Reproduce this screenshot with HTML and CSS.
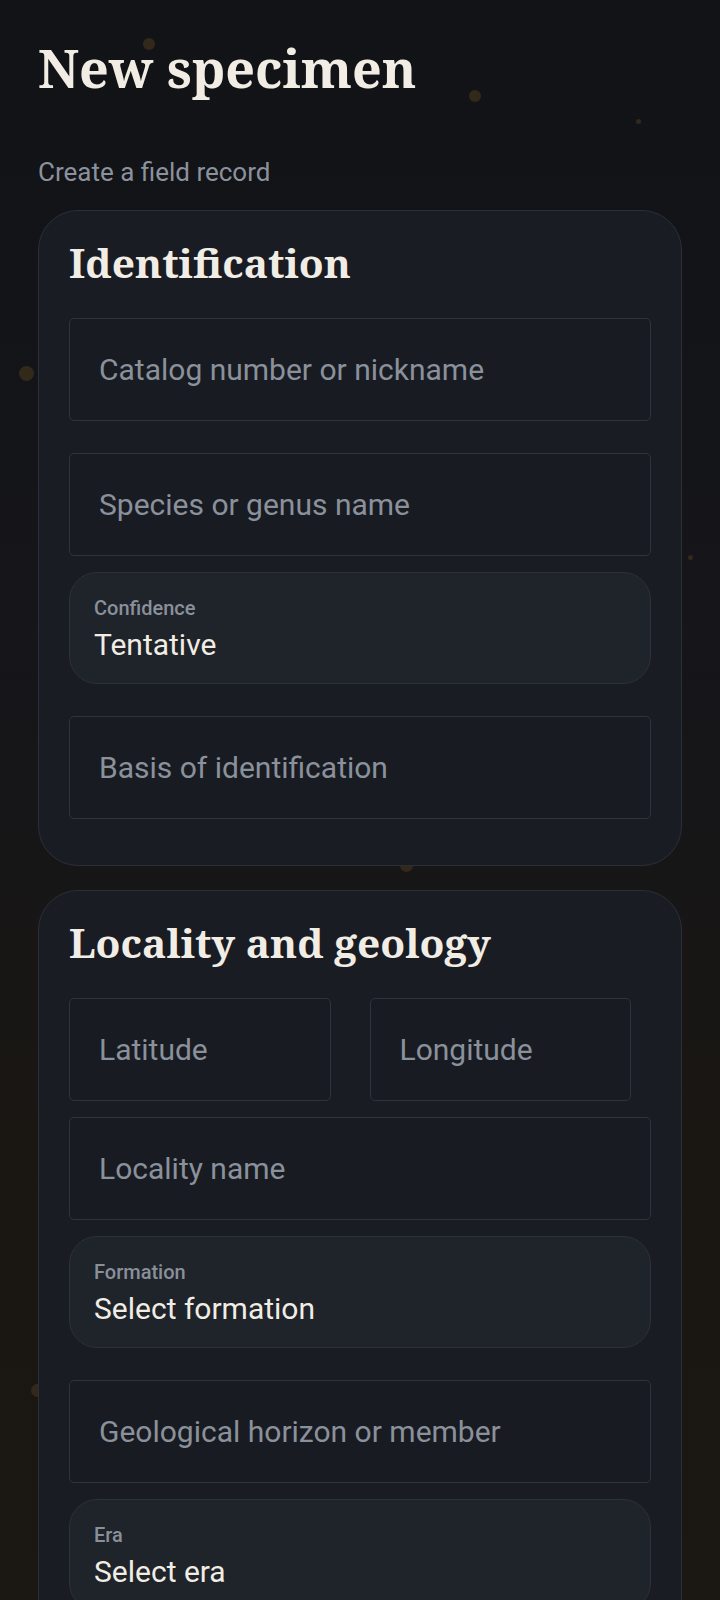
FILE: index.html
```html
<!DOCTYPE html>
<html lang="en">
<head>
    <meta charset="UTF-8">
    <meta name="viewport" content="width=device-width, initial-scale=1.0">
    <title>New specimen</title>
    <link rel="stylesheet" href="styles.css">
</head>
<body>
    <!-- faint dust specks floating behind the form -->
    <div class="dust">
        <span class="speck" style="left: 143px; top: 38px; width: 12px; height: 12px;"></span>
        <span class="speck" style="left: 469px; top: 90px; width: 12px; height: 12px;"></span>
        <span class="speck" style="left: 636px; top: 119px; width: 5px; height: 5px;"></span>
        <span class="speck" style="left: 19px; top: 366px; width: 15px; height: 15px;"></span>
        <span class="speck" style="left: 688px; top: 555px; width: 5px; height: 5px;"></span>
        <span class="speck" style="left: 400px; top: 859px; width: 13px; height: 13px;"></span>
        <span class="speck" style="left: 31px; top: 1384px; width: 13px; height: 13px;"></span>
    </div>

    <main class="page">
        <header class="page-header">
            <h1>New specimen</h1>
            <p class="subtitle">Create a field record</p>
        </header>

        <section class="card">
            <h2>Identification</h2>
            <input class="text-field" type="text" placeholder="Catalog number or nickname">
            <input class="text-field spaced" type="text" placeholder="Species or genus name">
            <div class="select-field">
                <span class="select-label">Confidence</span>
                <span class="select-value">Tentative</span>
            </div>
            <input class="text-field spaced" type="text" placeholder="Basis of identification">
        </section>

        <section class="card">
            <h2>Locality and geology</h2>
            <div class="field-row">
                <input class="text-field" type="text" placeholder="Latitude">
                <input class="text-field" type="text" placeholder="Longitude">
            </div>
            <input class="text-field" type="text" placeholder="Locality name">
            <div class="select-field">
                <span class="select-label">Formation</span>
                <span class="select-value">Select formation</span>
            </div>
            <input class="text-field spaced" type="text" placeholder="Geological horizon or member">
            <div class="select-field">
                <span class="select-label">Era</span>
                <span class="select-value">Select era</span>
            </div>
            <input class="text-field spaced" type="text" placeholder="Period or stage">
        </section>
    </main>
</body>
</html>
```

FILE: styles.css
```css
body {
    margin: 0;
    min-height: 1600px;
    font-family: Roboto, "Noto Sans", Arial, sans-serif;
    color: #f1ede4;
    background: linear-gradient(180deg, #111317 0%, #15151a 35%, #1a1712 65%, #1b1712 100%);
    position: relative;
    overflow: hidden;
}

.dust {
    position: absolute;
    inset: 0;
    z-index: 0;
}

.speck {
    position: absolute;
    border-radius: 50%;
    background: #33291b;
}

.page {
    position: relative;
    z-index: 1;
    padding: 0 38px;
}

.page-header h1 {
    margin: 0;
    padding-top: 37px;
    font-family: "Noto Serif", "DejaVu Serif", serif;
    font-size: 52px;
    font-weight: 700;
    line-height: 1.2;
    color: #f1ede4;
}

.subtitle {
    margin: 0;
    padding: 58px 0 0;
    font-size: 26px;
    line-height: 1.2;
    color: #8b929c;
}

.card {
    margin-top: 21px;
    margin-bottom: 24px;
    padding: 27px 30px 30px;
    background: #191c23;
    border: 1px solid #2a2f38;
    border-radius: 40px;
    display: flex;
    flex-direction: column;
}

.card h2 {
    margin: 0 0 32px;
    font-family: "Noto Serif", "DejaVu Serif", serif;
    font-size: 40.7px;
    font-weight: 700;
    line-height: 48px;
    color: #f1ede4;
}

.text-field {
    display: block;
    box-sizing: border-box;
    width: 100%;
    height: 103px;
    margin: 0 0 16px;
    padding: 0 29px;
    font-family: Roboto, "Noto Sans", Arial, sans-serif;
    font-size: 30px;
    color: #f1ede4;
    background: #181b22;
    border: 1px solid #2e333c;
    border-radius: 5px;
    outline: none;
}

.text-field::placeholder {
    color: #8a919b;
}

.text-field.spaced {
    margin-top: 16px;
}

.field-row {
    display: flex;
    gap: 39px;
    padding-right: 20px;
}

.field-row .text-field {
    flex: 1;
    min-width: 0;
}

.select-field {
    box-sizing: border-box;
    height: 112px;
    margin-bottom: 16px;
    padding: 23px 24px 0;
    background: #1f232a;
    border: 1px solid #2c313a;
    border-radius: 28px;
    display: flex;
    flex-direction: column;
}

.select-label {
    font-size: 20px;
    font-weight: 500;
    line-height: 24px;
    color: #8a909a;
}

.select-value {
    margin-top: 7px;
    font-size: 30px;
    line-height: 36px;
    color: #f1ede4;
}
```
